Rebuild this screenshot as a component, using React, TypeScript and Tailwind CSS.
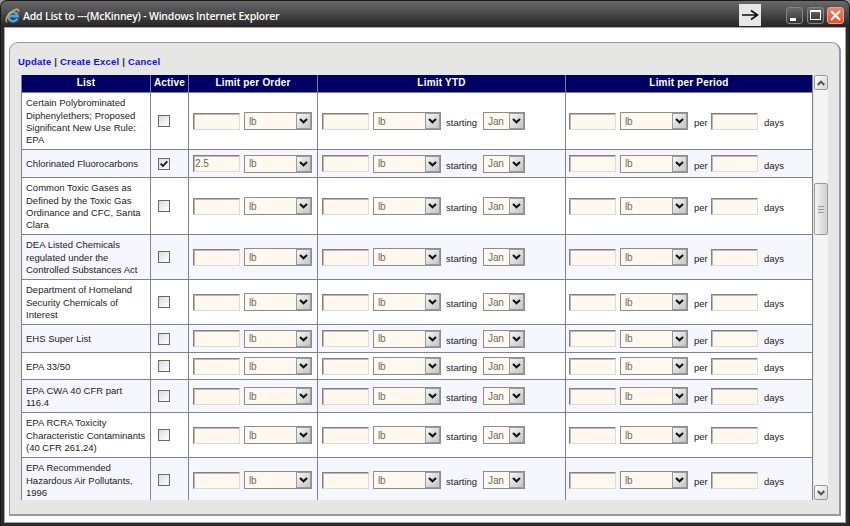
import React from "react";

const rows = [
  { lines: ["Certain Polybrominated", "Diphenylethers; Proposed", "Significant New Use Rule:", "EPA"], h: "h-[57px]" },
  { lines: ["Chlorinated Fluorocarbons"], h: "h-[28px]", active: true, value: "2.5" },
  { lines: ["Common Toxic Gases as", "Defined by the Toxic Gas", "Ordinance and CFC, Santa", "Clara"], h: "h-[57px]" },
  { lines: ["DEA Listed Chemicals", "regulated under the", "Controlled Substances Act"], h: "h-[45px]" },
  { lines: ["Department of Homeland", "Security Chemicals of", "Interest"], h: "h-[45px]" },
  { lines: ["EHS Super List"], h: "h-[28px]" },
  { lines: ["EPA 33/50"], h: "h-[27px]" },
  { lines: ["EPA CWA 40 CFR part", "116.4"], h: "h-[33px]" },
  { lines: ["EPA RCRA Toxicity", "Characteristic Contaminants", "(40 CFR 261.24)"], h: "h-[45px]" },
  { lines: ["EPA Recommended", "Hazardous Air Pollutants,", "1996"], h: "h-[45px]" },
];

const cols = "grid grid-cols-[129px_38px_129px_248px_247px]";
const cell = "flex items-center border-r border-b border-[#83808f]";

function Field({ value = "" }: { value?: string }) {
  return (
    <input
      defaultValue={value}
      className="h-[17px] w-[47px] shrink-0 border border-t-[#808080] border-l-[#808080] border-r-[#dedbd5] border-b-[#dedbd5] bg-[#fff8ee] pl-px text-[10px] text-[#666] shadow-[inset_1px_1px_0_#bdb9b2] outline-none"
    />
  );
}

function Select({ label, w }: { label: string; w: string }) {
  return (
    <div className={`flex h-[18px] ${w} shrink-0 items-center justify-between border border-[#8d8d8d] bg-[#fff8ee] pl-[4px] text-[10px] tracking-[-0.1px] text-[#6b6b6b]`}>
      <span>{label}</span>
      <span className="flex h-4 w-[15px] items-center justify-center border border-[#9a9a9a] bg-gradient-to-br from-[#f6f6f6] to-[#c4c4c4]">
        <svg width="9" height="6" viewBox="0 0 9 6" fill="none" stroke="#111" strokeWidth="2.1">
          <path d="M1 1l3.5 3.3L8 1" />
        </svg>
      </span>
    </div>
  );
}

function Check({ on }: { on?: boolean }) {
  return (
    <span className="flex size-3 items-center justify-center border border-[#686868] bg-gradient-to-br from-[#dcdcdc] to-white">
      {on && (
        <svg width="8" height="8" viewBox="0 0 8 8" fill="none" stroke="#111" strokeWidth="1.8">
          <path d="M.7 3.6L3 6l4.300-4.600" />
        </svg>
      )}
    </span>
  );
}

function Pair({ value }: { value?: string }) {
  return (
    <>
      <Field value={value} />
      <span className="w-1 shrink-0" />
      <Select label="lb" w="w-[68px]" />
    </>
  );
}

function ScrollButton({ down }: { down?: boolean }) {
  return (
    <div className="flex h-[15px] w-[14px] items-center justify-center rounded-[2px] border border-[#999] bg-gradient-to-br from-white to-[#d4d4d4]">
      <svg width="8" height="6" viewBox="0 0 8 6" fill="none" stroke="#505058" strokeWidth="2">
        <path d={down ? "M.7 1L4 4.300 7.300 1" : "M.7 5L4 1.700 7.300 5"} />
      </svg>
    </div>
  );
}

export default function App() {
  return (
    <div className="flex h-[526px] w-[850px] flex-col overflow-hidden bg-[#9b9b9b] font-['Liberation_Sans',Arial,sans-serif]">
      <div className="flex h-[526px] flex-col rounded-t-[7px] border-x border-t border-[#1a1a1a] bg-[#2b2b2b]">
        <div className="flex h-[26px] shrink-0 items-center rounded-t-[6px] bg-gradient-to-b from-[#6a6a6a] via-[#484848] to-[#242424] pr-[5px] pl-[4px]">
          <svg width="15" height="15" viewBox="0 0 15 15" fill="none" className="mt-[2px]">
            <path d="M12.300 10.400A4.600 4.600 0 1 1 12.600 8.100H4.500" stroke="#4ba3e8" strokeWidth="2.600" />
            <path d="M2.200 14C-.8 13.200 2.600 5.500 8.500 2.400c3.200-1.700 5.600-1.600 5 1.400" stroke="#f0a93a" strokeWidth="1.400" />
          </svg>
          <span className="mt-[3px] ml-[3px] text-[10.5px] leading-[14px] font-semibold tracking-[-0.21px] whitespace-pre text-white font-['Open_Sans',sans-serif]">
            Add List to ---(McKinney) - Windows Internet Explorer
          </span>
          <span className="mt-px ml-auto flex h-[22px] w-[22px] items-center justify-center bg-[#e6e6e6]">
            <svg width="18" height="12" viewBox="0 0 18 12" fill="none" stroke="#111" strokeWidth="1.600">
              <path d="M1 6h15.500M10 1.500L16.500 6 10 10.500" />
            </svg>
          </span>
          <span className="mt-[2px] ml-[25px] flex h-[17px] w-[17px] rounded-[3px] border border-[#858585] bg-gradient-to-b from-[#6b6b6b] to-[#333]">
            <span className="mt-[10px] ml-[3px] h-[3px] w-[6px] bg-white" />
          </span>
          <span className="mt-[2px] ml-[4px] flex h-[17px] w-[17px] items-center justify-center rounded-[3px] border border-[#858585] bg-gradient-to-b from-[#6b6b6b] to-[#333]">
            <span className="h-[10px] w-[11px] border border-t-2 border-white" />
          </span>
          <span className="mt-[2px] ml-[3px] flex h-[17px] w-[17px] items-center justify-center rounded-[3px] border border-[#f0a08c] bg-gradient-to-b from-[#e88668] to-[#e2502a]">
            <svg width="11" height="11" viewBox="0 0 11 11" stroke="#fff" strokeWidth="2">
              <path d="M1 1l9 9M10 1l-9 9" />
            </svg>
          </span>
        </div>
        <div className="mr-[3px] mb-[3px] ml-[3px] flex flex-1 flex-col border border-[#a5a5a5] bg-white px-[4px] pt-[14px] pb-[6px]">
          <div className="flex flex-1 flex-col rounded-t-[9px] border border-r-2 border-b-2 border-[#9997a0] bg-[#e6e6e4] pl-[11px]">
            <div className="-ml-[3px] h-[32px] pt-[12px] text-[9.5px] leading-[14px] font-bold tracking-[0.2px] whitespace-pre text-[#1010ee]">
              Update <span className="text-[#333]">|</span> Create Excel <span className="text-[#333]">|</span> Cancel
            </div>
            <div className="flex h-[425px]">
              <div className="h-[425px] w-[792px] shrink-0 overflow-hidden border-l border-[#83808f]">
                <div className={`${cols} h-[18px] bg-[#000064] text-center text-[10px] leading-[15px] font-bold tracking-[0.2px] text-white`}>
                  {["List", "Active", "Limit per Order", "Limit YTD", "Limit per Period"].map((t) => (
                    <div key={t} className="border-r border-b border-[#83808f]">{t}</div>
                  ))}
                </div>
                {rows.map((r, i) => (
                  <div key={i} className={`${cols} ${r.h} ${i % 2 ? "bg-[#f6f6ff]" : "bg-white"}`}>
                    <div className={`${cell} pt-[2px] pl-[4px] text-[9.500px] leading-[12.400px] whitespace-nowrap text-[#222]`}>
                      <div>{r.lines.map((l) => <div key={l}>{l}</div>)}</div>
                    </div>
                    <div className={`${cell} pl-[7px]`}>
                      <Check on={r.active} />
                    </div>
                    <div className={`${cell} pl-[4px]`}>
                      <Pair value={r.value} />
                    </div>
                    <div className={`${cell} pl-[4px] text-[9.500px] text-[#222]`}>
                      <Pair />
                      <span className="w-[42px] shrink-0 pt-[5px] pl-[5px]">starting</span>
                      <Select label="Jan" w="w-[42px]" />
                    </div>
                    <div className={`${cell} pl-[3px] text-[9.500px] text-[#222]`}>
                      <Pair />
                      <span className="w-[23px] shrink-0 pt-[5px] pl-[6px]">per</span>
                      <Field />
                      <span className="pt-[5px] pl-[6px]">days</span>
                    </div>
                  </div>
                ))}
              </div>
              <div className="ml-px flex w-[14px] flex-col bg-[#f5f5f5]">
                <ScrollButton />
                <div className="mt-[93px] flex h-[52px] w-[14px] items-center justify-center rounded-[2px] border border-[#999] bg-gradient-to-r from-[#f5f5f5] to-[#cfcfcf]">
                  <span className="h-[7px] w-[6px] border-y border-[#999] bg-[linear-gradient(#ddd_2px,#999_2px,#999_3px,#ddd_3px)]" />
                </div>
                <div className="mt-auto">
                  <ScrollButton down />
                </div>
              </div>
            </div>
          </div>
        </div>
      </div>
    </div>
  );
}
